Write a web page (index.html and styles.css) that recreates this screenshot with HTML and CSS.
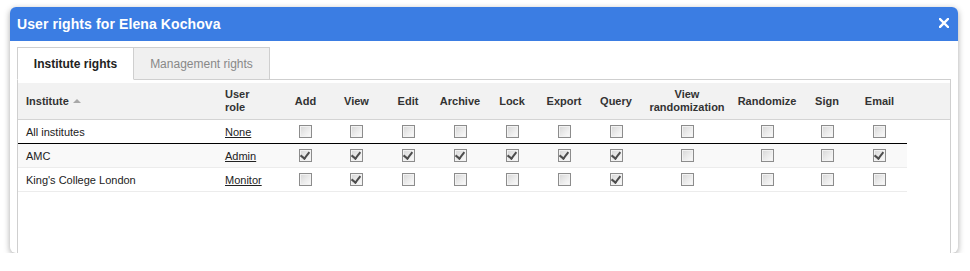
FILE: index.html
```html
<!DOCTYPE html>
<html>
<head>
<meta charset="utf-8">
<link rel="stylesheet" href="styles.css">
</head>
<body>
<div class="dialog">
  <div class="titlebar">
    <span class="title">User rights for Elena Kochova</span>
    <span class="close"><svg width="10" height="10" viewBox="0 0 10 10"><path d="M1 1L9 9M9 1L1 9" stroke="#fff" stroke-width="2.4" stroke-linecap="square"/></svg></span>
  </div>
  <div class="content">
    <div class="tabs">
      <div class="tab active">Institute rights</div>
      <div class="tab">Management rights</div>
    </div>
    <div class="panel">
      <table class="rights">
        <colgroup>
          <col class="c-inst"><col class="c-role"><col class="c-51"><col class="c-51"><col class="c-52"><col class="c-52"><col class="c-52"><col class="c-52"><col class="c-52"><col class="c-vr"><col class="c-rand"><col class="c-sign"><col class="c-email"><col class="c-fill">
        </colgroup>
        <thead>
          <tr>
            <th class="left">Institute <span class="sort"></span></th>
            <th class="left">User<br>role</th>
            <th>Add</th><th>View</th><th>Edit</th><th>Archive</th><th>Lock</th><th>Export</th><th>Query</th>
            <th>View<br>randomization</th><th>Randomize</th><th>Sign</th><th>Email</th><th class="fill"></th>
          </tr>
        </thead>
        <tbody>
          <tr class="r-first">
            <td class="left">All institutes</td><td class="left"><a href="#">None</a></td>
            <td><span class="cb"></span></td><td><span class="cb"></span></td><td><span class="cb"></span></td><td><span class="cb"></span></td><td><span class="cb"></span></td><td><span class="cb"></span></td><td><span class="cb"></span></td><td><span class="cb"></span></td><td><span class="cb"></span></td><td><span class="cb"></span></td><td><span class="cb"></span></td><td class="fill"></td>
          </tr>
          <tr class="r-alt">
            <td class="left">AMC</td><td class="left"><a href="#">Admin</a></td>
            <td><span class="cb on"></span></td><td><span class="cb on"></span></td><td><span class="cb on"></span></td><td><span class="cb on"></span></td><td><span class="cb on"></span></td><td><span class="cb on"></span></td><td><span class="cb on"></span></td><td><span class="cb"></span></td><td><span class="cb"></span></td><td><span class="cb"></span></td><td><span class="cb on"></span></td><td class="fill"></td>
          </tr>
          <tr>
            <td class="left">King's College London</td><td class="left"><a href="#">Monitor</a></td>
            <td><span class="cb"></span></td><td><span class="cb on"></span></td><td><span class="cb"></span></td><td><span class="cb"></span></td><td><span class="cb"></span></td><td><span class="cb"></span></td><td><span class="cb on"></span></td><td><span class="cb"></span></td><td><span class="cb"></span></td><td><span class="cb"></span></td><td><span class="cb"></span></td><td class="fill"></td>
          </tr>
        </tbody>
      </table>
    </div>
  </div>
</div>
</body>
</html>
```
FILE: styles.css
```css
html, body {
  margin: 0;
  padding: 0;
  background: #fff;
  font-family: "Liberation Sans", Arial, sans-serif;
  color: #333;
}
body {
  padding: 7px 0 0 10px;
}
.dialog {
  width: 948px;
  height: 246px;
  background: #fff;
  border-radius: 6px;
  overflow: hidden;
  box-shadow: 0 2px 6px rgba(0,0,0,0.35);
  box-sizing: border-box;
}
.titlebar {
  height: 34px;
  background: #3b7de3;
  display: flex;
  align-items: center;
  justify-content: space-between;
  padding: 0 9px 0 7px;
}
.title {
  color: #fff;
  font-weight: bold;
  font-size: 14px;
  letter-spacing: 0.1px;
}
.close {
  display: flex;
  width: 10px;
  height: 10px;
  margin-top: -3px;
}
.content {
  padding: 6px 7px 0 7px;
}
.tabs {
  display: flex;
  position: relative;
  z-index: 1;
  margin-bottom: -1px;
}
.tab {
  box-sizing: border-box;
  height: 33px;
  display: flex;
  align-items: center;
  justify-content: center;
  font-size: 12px;
  border: 1px solid #cfcfcf;
  background: #f0f0f0;
  color: #888;
}
.tab.active {
  width: 117px;
  background: #fff;
  color: #222;
  font-weight: bold;
  border-bottom-color: #fff;
}
.tab:not(.active) {
  width: 136px;
  border-left: 0;
}
.panel {
  box-sizing: border-box;
  width: 934px;
  height: 220px;
  border: 1px solid #cfcfcf;
  padding-top: 3px;
}
.rights {
  width: 932px;
  table-layout: fixed;
  border-collapse: separate;
  border-spacing: 0;
  font-size: 11px;
}
.c-inst { width: 199px; }
.c-role { width: 63px; }
.c-51 { width: 51px; }
.c-52 { width: 52px; }
.c-vr { width: 90px; }
.c-rand { width: 70px; }
.c-sign { width: 50px; }
.c-email { width: 55px; }
.c-fill { width: 43px; }
.rights th {
  background: #f2f2f2;
  font-weight: bold;
  color: #333;
  height: 36px;
  padding: 0;
  line-height: 13px;
  text-align: center;
  vertical-align: middle;
  border-bottom: 1px solid #d4d4d4;
}
.rights .left {
  text-align: left;
  padding-left: 8px;
}
.sort {
  display: inline-block;
  width: 0;
  height: 0;
  border-left: 4px solid transparent;
  border-right: 4px solid transparent;
  border-bottom: 4px solid #a8a8a8;
  margin-left: 1px;
  vertical-align: 2px;
}
.rights td {
  height: 23px;
  padding: 0;
  text-align: center;
  vertical-align: middle;
  color: #222;
  border-bottom: 1px solid #ececec;
}
.rights td.fill {
  border-bottom: 0;
  background: #fff;
}
.rights tr.r-first td {
  border-bottom-color: #000;
}
.rights tr.r-alt td {
  background: #f9f9f9;
}
.rights tr.r-alt td.fill {
  background: #fff;
}
.rights a {
  color: #222;
  text-decoration: underline;
}
.cb {
  display: inline-block;
  box-sizing: border-box;
  width: 13px;
  height: 13px;
  border: 1px solid #8c8c8c;
  background: linear-gradient(135deg, #d6d6d6 0%, #ececec 55%, #fbfbfb 100%);
  box-shadow: inset 0 0 0 1px #f2f2f2;
  vertical-align: middle;
  position: relative;
}
.cb.on::after {
  content: "";
  position: absolute;
  left: 2px;
  top: 0px;
  width: 4px;
  height: 7px;
  border-right: 2px solid #4d4d4d;
  border-bottom: 2px solid #4d4d4d;
  transform: rotate(38deg);
  transform-origin: center;
}
```
